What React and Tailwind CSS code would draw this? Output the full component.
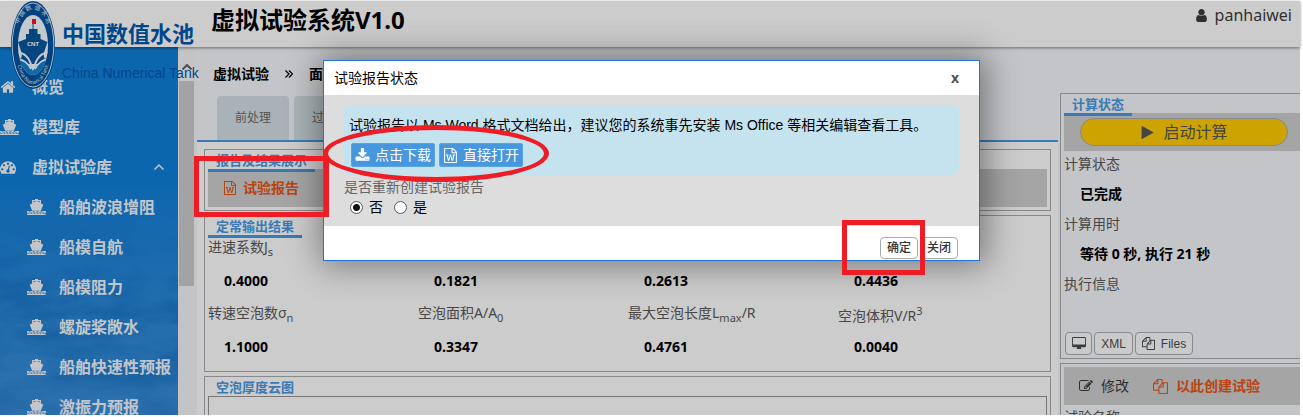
import React from "react";

const PATHS = {
  home: "M1472 992v480q0 26-19 45t-45 19h-384v-384h-256v384h-384q-26 0-45-19t-19-45v-480q0-1 .5-3t.5-3l575-474 575 474q1 2 1 6zm223-69l-62 74q-8 9-21 11h-3q-13 0-21-7l-692-577-692 577q-12 8-24 7-13-2-21-11l-62-74q-8-10-7-23.5t11-21.5l719-599q32-26 76-26t76 26l244 204v-195q0-14 9-23t23-9h192q14 0 23 9t9 23v408l219 182q10 8 11 21.5t-7 23.5z",
  download: "M1344 1344q0-26-19-45t-45-19-45 19-19 45 19 45 45 19 45-19 19-45zm256 0q0-26-19-45t-45-19-45 19-19 45 19 45 45 19 45-19 19-45zm128-224v320q0 40-28 68t-68 28h-1472q-40 0-68-28t-28-68v-320q0-40 28-68t68-28h465l135 136q58 56 136 56t136-56l136-136h464q40 0 68 28t28 68zm-325-569q17 41-14 70l-448 448q-18 19-45 19t-45-19l-448-448q-31-29-14-70 17-39 59-39h256v-448q0-26 19-45t45-19h256q26 0 45 19t19 45v448h256q42 0 59 39z",
  desktop: "M1792 992v-832q0-13-9.5-22.5t-22.5-9.5h-1600q-13 0-22.5 9.5t-9.5 22.5v832q0 13 9.5 22.5t22.5 9.5h1600q13 0 22.5-9.5t9.5-22.5zm128-832v1088q0 66-47 113t-113 47h-544q0 37 16 77.5t32 71 16 43.5q0 26-19 45t-45 19h-512q-26 0-45-19t-19-45q0-14 16-44t32-70 16-78h-544q-66 0-113-47t-47-113v-1088q0-66 47-113t113-47h1600q66 0 113 47t47 113z",
  user: "M1536 1399q0 109-62.5 187t-150.5 78h-854q-88 0-150.5-78t-62.5-187q0-85 8.5-160.5t31.5-152 58.5-131 94-89 134.5-34.5q131 128 313 128t313-128q76 0 134.5 34.5t94 89 58.5 131 31.5 152 8.5 160.5zm-256-887q0 159-112.5 271.5t-271.5 112.5-271.5-112.5-112.5-271.5 112.5-271.5 271.5-112.5 271.5 112.5 112.5 271.5z",
  play: "M1576 927l-1328 738q-23 13-39.5 3t-16.5-36v-1472q0-26 16.5-36t39.5 3l1328 738q23 13 23 31t-23 31z",
  files: "M1696 384q40 0 68 28t28 68v1216q0 40-28 68t-68 28h-960q-40 0-68-28t-28-68v-288h-544q-40 0-68-28t-28-68v-672q0-40 20-88t48-76l408-408q28-28 76-48t88-20h416q40 0 68 28t28 68v328q68-40 128-40h416zm-544 213l-299 299h299v-299zm-640-384l-299 299h299v-299zm196 647l316-316v-416h-384v416q0 40-28 68t-68 28h-416v640h512v-256q0-40 20-88t48-76zm956 804v-1152h-384v416q0 40-28 68t-68 28h-416v640h896z",
  edit: "M888 1184l116-116-152-152-116 116v56h96v96h56zm440-720q-16-16-33 1l-350 350q-17 17-1 33t33-1l350-350q17-17 1-33zm80 594v190q0 119-84.5 203.5t-203.5 84.5h-832q-119 0-203.5-84.5t-84.5-203.5v-832q0-119 84.5-203.5t203.5-84.5h832q63 0 117 25 15 7 18 23 3 17-9 29l-49 49q-14 14-32 8-23-6-45-6h-832q-66 0-113 47t-47 113v832q0 66 47 113t113 47h832q66 0 113-47t47-113v-126q0-13 9-22l64-64q15-15 35-7t20 29zm-96-738l288 288-672 672h-288v-288zm444 132l-92 92-288-288 92-92q28-28 68-28t68 28l152 152q28 28 28 68t-28 68z",
  word: "M1596 380q28 28 48 76t20 88v1152q0 40-28 68t-68 28h-1344q-40 0-68-28t-28-68v-1600q0-40 28-68t68-28h896q40 0 88 20t76 48zm-444-244v376h376q-10-29-22-41l-313-313q-12-12-41-22zm384 1528v-1024h-416q-40 0-68-28t-28-68v-416h-768v1536h1280zm-1175-896v107h70l164 661h159l128-485q7-20 10-46 2-16 2-24h4l3 24q1 3 3.5 20t5.5 26l128 485h159l164-661h70v-107h-300v107h90l-99 438q-5 20-7 46l-2 21h-4l-3-21q-1-5-4-21t-5-25l-144-545h-114l-144 545q-2 9-4.5 24.5t-3.5 21.5l-4 21h-4l-2-21q-2-26-7-46l-99-438h90v-107h-300z",
  gauge: "M384 1152q0-53-37.5-90.5t-90.5-37.5-90.5 37.5-37.5 90.5 37.5 90.5 90.5 37.5 90.5-37.5 37.5-90.5zm192-448q0-53-37.5-90.5t-90.5-37.5-90.5 37.5-37.5 90.5 37.5 90.5 90.5 37.5 90.5-37.5 37.5-90.5zm428 481l101-382q6-26-7.5-48.5t-38.5-29.5-48 6.5-30 39.5l-101 382q-60 5-107 43.5t-63 98.5q-20 77 20 146t117 89 146-20 89-117q16-60-6-117t-72-91zm660-33q0-53-37.5-90.5t-90.5-37.5-90.5 37.5-37.5 90.5 37.5 90.5 90.5 37.5 90.5-37.5 37.5-90.5zm-640-640q0-53-37.5-90.5t-90.5-37.5-90.5 37.5-37.5 90.5 37.5 90.5 90.5 37.5 90.5-37.5 37.5-90.5zm448 192q0-53-37.5-90.5t-90.5-37.5-90.5 37.5-37.5 90.5 37.5 90.5 90.5 37.5 90.5-37.5 37.5-90.5zm320 448q0 261-141 483-19 29-54 29h-1402q-35 0-54-29-141-221-141-483 0-182 71-348t191-286 286-191 348-71 348 71 286 191 191 286 71 348z",
};

function Icon({ name, className, box = "0 0 1792 1792" }) {
  return (
    <svg viewBox={box} fill="currentColor" fillRule="evenodd" className={"shrink-0 " + className} aria-hidden="true">
      <path d={PATHS[name]} />
    </svg>
  );
}

function Ship() {
  return (
    <svg viewBox="0 0 19 16" fill="currentColor" className="h-4 w-[19px] shrink-0" aria-hidden="true">
      <path d="M8 0h3v1h3v3.500l2.300 1.200-2.500 6.100H5.200L2.700 5.700 5 4.500V1h3zM6.200 2.300v1l3.300-1 3.300 1v-1z" fillRule="evenodd" />
      <path d="M0 12h1.500l1 .8 1.500-.8h1l1.500.8 1.500-.8h1l1.500.8 1.500-.8h1l1.500.8 1.500-.8H19v1.400l-1.500.6-1.500-.7-1.500.7-1.500-.7-1.500.7-1.500-.7-1.500.7-1.500-.7-1.500.7-1.500-.7-1.500.7L0 13.400z" />
      <path d="M0 14.300l1.500.4 1.500-.6 1.500.6 1.500-.6 1.500.6 1.500-.6 1.500.6 1.500-.6 1.500.6 1.500-.6 1.500.6 2-.4V16H0z" />
    </svg>
  );
}

function Emblem() {
  return (
    <svg viewBox="0 0 44 88" className="h-[88px] w-11 shrink-0" aria-hidden="true">
      <defs>
        <path id="arc-top" d="M5.500 42 C5.500 -3 38.500 -3 38.500 42" />
        <path id="arc-bottom" d="M4 50 C8 94 36 94 40 50" />
        <clipPath id="inner"><ellipse cx="22" cy="44" rx="15" ry="30" /></clipPath>
      </defs>
      <ellipse cx="22" cy="44" rx="22" ry="44" fill="#04427f" />
      <ellipse cx="22" cy="44" rx="20.800" ry="42" fill="none" stroke="#b9c4cf" strokeWidth=".9" />
      <ellipse cx="22" cy="44" rx="15" ry="30" fill="#c4c9ce" />
      <g clipPath="url(#inner)">
        <path d="M21.500 20h1v8h4v5h3v5l7 3-4 12 2 10H9l2-10-4-12 8-3v-5h3v-5h3.500z" fill="#07457f" />
        <path d="M6 56q10 2 16 14 6-12 16-14v26H6z" fill="#0c68a8" />
        <path d="M5 52q11-2 16 14M39 52q-11-2-16 14M5 58q10 0 15 10M39 58q-10 0-15 10" fill="none" stroke="#c4c9ce" strokeWidth="1.800" />
      </g>
      <rect x="21" y="18" width="4" height="5" fill="#d40a20" />
      <text x="22" y="45" textAnchor="middle" fontSize="6" fontWeight="700" fill="#c4c9ce">CNT</text>
      <text fontSize="6" fill="#b9c4cf"><textPath href="#arc-top" startOffset="50%" textAnchor="middle">中 国 数 值 水 池</textPath></text>
      <text fontSize="5" fill="#b9c4cf"><textPath href="#arc-bottom" startOffset="50%" textAnchor="middle">China Numerical Tank</textPath></text>
    </svg>
  );
}

function Logo() {
  return (
    <div className="absolute left-[11px] top-0 z-20 flex h-[88px] w-[190px] items-center gap-[7px] text-[#00468a]">
      <Emblem />
      <div className="flex flex-col gap-3 whitespace-nowrap pt-3">
        <span className="text-[22px] font-bold leading-[32px]">中国数值水池</span>
        <span className="font-['Liberation_Sans',sans-serif] text-sm leading-6">China Numerical Tank</span>
      </div>
    </div>
  );
}

const SUB_ITEMS = ["船舶波浪增阻", "船模自航", "船模阻力", "螺旋桨敞水", "船舶快速性预报", "激振力预报"];
const ROW = "flex h-10 items-center text-base font-bold text-[#c2c6ca]";

function Sidebar() {
  return (
    <aside className="flex w-[197px] shrink-0 overflow-hidden">
      <nav className="relative w-[178px] shrink-0 overflow-hidden bg-linear-to-b from-[#0b66ad] from-35% to-[#2e72ae]">
        <svg viewBox="0 0 178 368" preserveAspectRatio="none" className="absolute inset-0 size-full" aria-hidden="true">
          <defs>
            <filter id="soft" x="0" y="0" width="100%" height="100%" colorInterpolationFilters="sRGB">
              <feTurbulence type="fractalNoise" baseFrequency=".015 .035" numOctaves="5" seed="8" />
              <feColorMatrix values="0 0 0 0 .03  0 0 0 0 .32  0 0 0 0 .58  2.600 0 0 0 -1.000" />
            </filter>
            <linearGradient id="fade" x2="0" y2="1">
              <stop offset=".45" stopColor="#000" />
              <stop offset=".68" stopColor="#fff" />
              <stop offset="1" stopColor="#888" />
            </linearGradient>
            <mask id="lower"><rect width="178" height="368" fill="url(#fade)" /></mask>
          </defs>
          <g mask="url(#lower)"><rect width="178" height="368" filter="url(#soft)" opacity=".6" /></g>
        </svg>
        <div className="relative pt-5">
          <a href="#overview" className={ROW}><Icon name="home" className="mr-4 size-4" />概览</a>
          <a href="#models" className={ROW + " gap-[13px]"}><Ship />模型库</a>
          <a href="#tests" className={ROW}>
            <Icon name="gauge" className="mr-4 size-4" />虚拟试验库
            <svg viewBox="0 0 10 6" className="ml-auto mr-[14px] h-[6px] w-[10px]" fill="none" stroke="currentColor" strokeWidth="1.500" aria-hidden="true"><path d="M.5 5.500L5 1l4.500 4.500" /></svg>
          </a>
          {SUB_ITEMS.map((t) => (
            <a href="#test" key={t} className={ROW + " gap-[13px] whitespace-nowrap pl-[27px]"}><Ship />{t}</a>
          ))}
        </div>
      </nav>
      <div className="flex w-[17px] flex-col items-center bg-[#c3c4c5] pt-[17px]">
        <svg viewBox="0 0 10 6" className="h-[6px] w-[10px] shrink-0" fill="none" stroke="#505050" strokeWidth="2" aria-hidden="true"><path d="M.5 5.500L5 1l4.500 4.500" /></svg>
        <div className="mt-[11px] h-[205px] w-[15px] shrink-0 bg-[#a3a3a3]" />
      </div>
    </aside>
  );
}

function Heading({ children, line = true }) {
  return (
    <h2 className={"relative z-10 w-fit px-2 text-[13px] font-bold leading-[17px] text-[#3a7ab5] " + (line ? "-mb-[3px] border-b-[3px] border-[#3a7ab5]" : "")}>
      {children}
    </h2>
  );
}

const BOX = "border border-[#87898b]";

const Sub = ({ children }) => <sub className="static align-sub text-[11px] leading-4">{children}</sub>;
const Sup = ({ children }) => <sup className="static align-super text-[11px] leading-4">{children}</sup>;

function Metric({ label, value }) {
  return (
    <div>
      <dt className="min-h-[23px] text-[#484848]">{label}</dt>
      <dd className="pl-4 pt-[11px] font-bold text-black">{value}</dd>
    </div>
  );
}

function Main() {
  return (
    <main className="flex min-w-0 flex-1 flex-col">
      <div className="flex h-[49px] shrink-0 items-center gap-4 pl-4 pt-[5px] font-bold text-black">
        <span>虚拟试验</span>
        <svg viewBox="0 0 8 8" className="size-2" fill="none" stroke="currentColor" strokeWidth="1.200" aria-hidden="true"><path d="M.5.500L4 4 .5 7.500M4 .5L7.500 4 4 7.500" /></svg>
        <span>面</span>
      </div>
      <div className="flex h-11 shrink-0 gap-[5px] pl-5 text-xs text-[#555]">
        <button className="w-[72px] rounded-t bg-[#a9b2b6]">前处理</button>
        <button className="w-[72px] rounded-t bg-[#a9b2b6] pl-[18px] text-left">过</button>
      </div>
      <div className="flex min-h-0 flex-1 flex-col gap-1 overflow-hidden border-t-2 border-[#3a7ab5] bg-[#ccc] px-[7px] pt-[7px]">
        <section className={BOX + " shrink-0 p-[3px] pt-[2px]"}>
          <Heading>报告及结果展示</Heading>
          <div className="flex h-[38px] items-center bg-[#a5a5a5] pl-[15px]">
            <button className="flex items-center gap-[6px] font-bold text-[#b84410]"><Icon name="word" className="size-[14px]" />试验报告</button>
          </div>
        </section>
        <section className={BOX + " h-[157px] shrink-0 px-[3px] pt-[2px]"}>
          <Heading>定常输出结果</Heading>
          <dl className="mt-[2px] grid grid-cols-[repeat(4,210px)] gap-y-3 leading-5">
            <Metric label={<>进速系数J<Sub>s</Sub></>} value="0.4000" />
            <Metric label={<>&nbsp;</>} value="0.1821" />
            <Metric label={<>&nbsp;</>} value="0.2613" />
            <Metric label={<>&nbsp;</>} value="0.4436" />
            <Metric label={<>转速空泡数σ<Sub>n</Sub></>} value="1.1000" />
            <Metric label={<>空泡面积A/A<Sub>0</Sub></>} value="0.3347" />
            <Metric label={<>最大空泡长度L<Sub>max</Sub>/R</>} value="0.4761" />
            <Metric label={<>空泡体积V/R<Sup>3</Sup></>} value="0.0040" />
          </dl>
        </section>
        <section className={BOX + " flex flex-1 flex-col border-b-0 px-[3px] pt-[2px]"}>
          <Heading line={false}>空泡厚度云图</Heading>
          <div className="flex-1 border border-b-0 border-[#777]" />
        </section>
      </div>
    </main>
  );
}

const SMALL = "flex h-[23px] items-center justify-center rounded border border-[#87898b] bg-[#c9cacb] font-['Liberation_Sans','Noto_Sans_CJK_SC',sans-serif] text-xs text-[#3c3c3c]";

function RightPanel() {
  return (
    <aside className="flex w-[242px] shrink-0 flex-col gap-1 overflow-hidden pl-[2px] pt-[46px]">
      <section className={BOX + " h-[266px] shrink-0 border-r-0 pl-[3px] pt-[2px]"}>
        <Heading>计算状态</Heading>
        <div className="flex h-[38px] items-center justify-center bg-[#a5a5a5] pl-1">
          <button className="flex h-7 w-[208px] items-center justify-center gap-2 rounded-full border border-[#87898b] bg-[#cca300] text-base text-[#444]">
            <Icon name="play" className="size-[15px]" />启动计算
          </button>
        </div>
        <dl className="-mt-[2px] leading-[30px] [&_dd]:pl-4 [&_dd]:font-bold [&_dd]:text-black [&_dt]:text-[#484848]">
          <dt>计算状态</dt>
          <dd>已完成</dd>
          <dt>计算用时</dt>
          <dd>等待 0 秒, 执行 21 秒</dd>
          <dt>执行信息</dt>
        </dl>
        <div className="mt-[33px] flex gap-[2px] pl-px">
          <button aria-label="监视" className={SMALL + " w-[27px]"}><Icon name="desktop" box="0 0 1920 1792" className="h-[13px] w-[14px]" /></button>
          <button className={SMALL + " w-[39px]"}>XML</button>
          <button className={SMALL + " w-[58px] gap-[6px]"}><Icon name="files" className="size-[13px]" />Files</button>
        </div>
      </section>
      <section className={BOX + " shrink-0 border-r-0 pl-[3px] pt-[3px]"}>
        <div className="flex h-[38px] items-center gap-6 bg-[#a5a5a5] pl-[15px]">
          <button className="flex items-center gap-2 text-[#303030]"><Icon name="edit" className="size-[14px]" />修改</button>
          <button className="flex items-center gap-2 font-bold text-[#b84410]"><Icon name="files" className="size-[15px]" />以此创建试验</button>
        </div>
        <div className="leading-[24px] text-[#484848]">试验名称</div>
      </section>
    </aside>
  );
}

const RADIO = "size-[13px] appearance-none rounded-full border border-[#555] bg-white checked:bg-[radial-gradient(circle,#111_3px,#fff_4px)]";

function Dialog() {
  const action = "flex h-6 items-center gap-[5px] rounded-[2px] border border-[#5aa5e4] bg-[#4697dd] px-[3px] text-sm text-white";
  const foot = "h-[22px] w-[38px] rounded border border-[#aaa] bg-white text-xs font-medium text-[#333]";
  return (
    <div className="absolute inset-0 z-30 flex items-start justify-center pt-[60px]">
      <div role="dialog" aria-labelledby="dlg-title" className="w-[657px] border border-[#1f72e0] bg-white font-['Liberation_Sans','Noto_Sans_CJK_SC',sans-serif] text-sm text-black shadow-[2px_0_32px_4px_rgba(0,0,0,0.42)]">
        <div className="flex h-[34px] items-center justify-between pl-[10px] pr-5">
          <h1 id="dlg-title">试验报告状态</h1>
          <button className="font-['Noto_Sans',sans-serif] text-sm font-bold text-[#555]">x</button>
        </div>
        <div className="h-[131px] bg-[#ddd] px-5 pt-[10px]">
          <div className="flex h-[70px] flex-col gap-2 rounded-md bg-[#c5e3ee] pl-[5px] pt-[10px]">
            <p className="whitespace-nowrap leading-5">试验报告以 Ms Word 格式文档给出，建议您的系统事先安装 Ms Office 等相关编辑查看工具。</p>
            <div className="flex gap-1 pl-[2px]">
              <button className={action}><Icon name="download" className="size-[15px]" />点击下载</button>
              <button className={action}><Icon name="word" className="size-[15px]" />直接打开</button>
            </div>
          </div>
          <fieldset>
            <legend className="pt-[2px] leading-5 text-[#666]">是否重新创建试验报告</legend>
            <div className="flex gap-[11px] pl-[6px] leading-5">
              <label className="flex items-center gap-[6px]"><input type="radio" name="rebuild" defaultChecked className={RADIO} />否</label>
              <label className="flex items-center gap-[6px]"><input type="radio" name="rebuild" className={RADIO} />是</label>
            </div>
          </fieldset>
        </div>
        <div className="flex h-[34px] items-center justify-end gap-[2px] pr-[21px] pt-[10px]">
          <button className={foot}>确定</button>
          <button className={foot}>关闭</button>
        </div>
      </div>
    </div>
  );
}

export default function App() {
  return (
    <div className="relative flex h-screen flex-col overflow-hidden bg-white pb-[2px] pr-[3px] pt-px font-['Noto_Sans','Noto_Sans_CJK_SC',sans-serif] text-sm">
      <header className="relative z-10 flex h-[46px] shrink-0 justify-between bg-[#ccc] pl-[211px] pr-2 shadow-[0_1px_3px_rgba(0,0,0,0.45)]">
        <Logo />
        <h1 className="text-2xl font-bold leading-[38px] text-black">虚拟试验系统V1.0</h1>
        <div className="flex h-7 items-center gap-[6px] text-base text-[#303030]"><Icon name="user" className="size-[15px]" />panhaiwei</div>
      </header>
      <div className="flex min-h-0 flex-1 bg-[#c3c5c8]">
        <Sidebar />
        <Main />
        <RightPanel />
      </div>
      <Dialog />
      <div className="pointer-events-none absolute left-[194px] top-[156px] z-40 h-[61px] w-[135px] border-[5px] border-[#ee1c24]" />
      <div className="pointer-events-none absolute left-[842px] top-[220px] z-40 h-[55px] w-[83px] border-[5px] border-[#ee1c24]" />
      <div className="pointer-events-none absolute left-[323px] top-[125px] z-40 h-[57px] w-[226px] rounded-[50%] border-[5px] border-[#ee1c24]" />
    </div>
  );
}
